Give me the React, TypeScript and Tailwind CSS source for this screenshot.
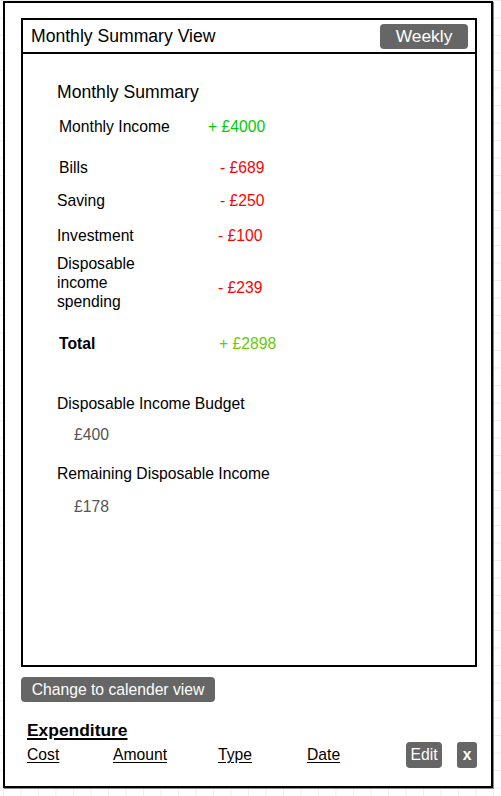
import React from "react";

const font = "font-['Liberation_Sans',Arial,sans-serif]";

export default function App() {
  return (
    <div
      className={`${font} w-[501px] h-[796px] overflow-hidden bg-white bg-[linear-gradient(to_right,#eeeeee_1px,transparent_1px),linear-gradient(to_bottom,#eeeeee_1px,transparent_1px)] [background-size:17.5px_17.5px] [background-position:3px_0px] pt-px pl-[3px]`}
    >
      <div className="w-[490px] h-[787px] border-2 border-black bg-white shadow-[1px_1px_0_#8a8a8a] pt-[15px] pl-4">
        {/* summary panel */}
        <div className="w-[456px] h-[649px] border-2 border-black flex flex-col">
          <div className="h-[34px] border-b-2 border-black flex items-center justify-between pl-2 pr-[7px]">
            <span className="text-[17.6px] text-black leading-5">Monthly Summary View</span>
            <button className="w-[88px] h-[25px] rounded-[4px] bg-[#666666] text-white text-[17.4px] leading-5">
              Weekly
            </button>
          </div>

          <div className="flex flex-col text-[15.7px] leading-[19px] text-black">
            <div className="mt-[28px] ml-[34px] text-[17.6px] leading-5">Monthly Summary</div>

            <div className="mt-[14.6px] flex">
              <span className="ml-9 w-[149px]">Monthly Income</span>
              <span className="text-[#00cc00]">+ £4000</span>
            </div>
            <div className="mt-[22px] flex">
              <span className="ml-9 w-[161px]">Bills</span>
              <span className="text-[#ff0000]">- £689</span>
            </div>
            <div className="mt-[14px] flex">
              <span className="ml-[34px] w-[163px]">Saving</span>
              <span className="text-[#ff0000]">- £250</span>
            </div>
            <div className="mt-4 flex">
              <span className="ml-[34px] w-[161px]">Investment</span>
              <span className="text-[#ff0000]">- £100</span>
            </div>
            <div className="mt-[9px] flex items-start">
              <span className="ml-[34px] w-[161px] pr-[60px]">Disposable income spending</span>
              <span className="mt-6 text-[#ff0000]">- £239</span>
            </div>
            <div className="mt-[23.3px] flex font-bold">
              <span className="ml-9 w-[160px]">Total</span>
              <span className="font-normal text-[#66cc00]">+ £2898</span>
            </div>

            <div className="mt-[41px] ml-[34px]">Disposable Income Budget</div>
            <div className="mt-3 ml-[51px] text-[#555555]">£400</div>
            <div className="mt-5 ml-[34px]">Remaining Disposable Income</div>
            <div className="mt-[14px] ml-[51px] text-[#555555]">£178</div>
          </div>
        </div>

        <button className="mt-[10px] w-[194px] h-[25px] rounded-[4px] bg-[#666666] text-white text-[15.7px] leading-5">
          Change to calender view
        </button>

        {/* expenditure */}
        <div className="mt-[17.7px] ml-[6px] text-[17.4px] leading-5 font-bold underline underline-offset-[2px] decoration-[1.5px]">
          Expenditure
        </div>
        <div className="mt-[2px] h-[26px] flex items-center text-[15.7px] leading-[19px]">
          <span className="ml-[6px] w-[86px]">
            <span className="underline underline-offset-[2px]">Cost</span>
          </span>
          <span className="w-[105px]">
            <span className="underline underline-offset-[2px]">Amount</span>
          </span>
          <span className="w-[89px]">
            <span className="underline underline-offset-[2px]">Type</span>
          </span>
          <span className="w-[99px]">
            <span className="underline underline-offset-[2px]">Date</span>
          </span>
          <button className="w-[36px] h-[26px] rounded-[4px] bg-[#666666] text-white text-[15.7px]">
            Edit
          </button>
          <button className="ml-[15px] w-[20px] h-[26px] rounded-[3px] bg-[#666666] text-white font-bold text-[15.7px]">
            x
          </button>
        </div>
      </div>
    </div>
  );
}
